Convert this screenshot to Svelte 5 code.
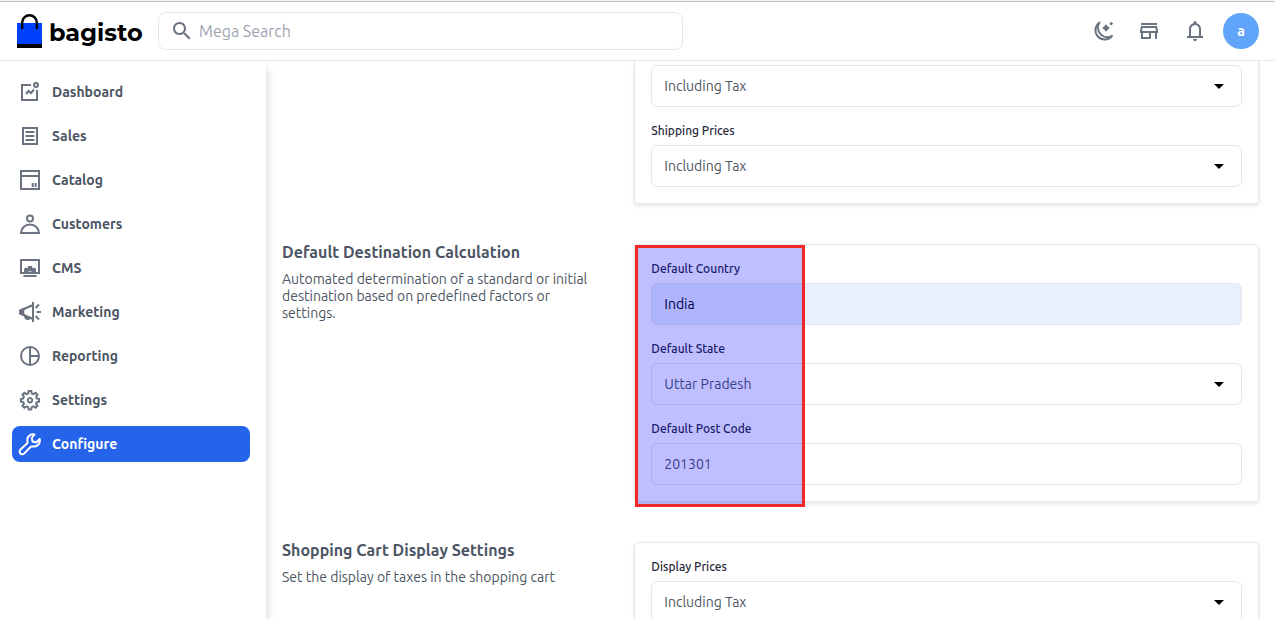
<script>
    let search = "";
    let displayPrices = "Including Tax";
    let shippingPrices = "Including Tax";
    let cartPrices = "Including Tax";
    let country = "India";
    let region = "Uttar Pradesh";
    let postCode = "201301";

    const taxOptions = ["Including Tax", "Excluding Tax", "Both"];
    const active = "Configure";

    const menu = [
        { name: "Dashboard", icon: "M13 5H4v15h15V10M8 14l2.500-3 2.500 2L16 9.500M18 3a2 2 0 1 0 0 4a2 2 0 1 0 0-4z" },
        { name: "Sales", icon: "M5 4h14v16H5zM7.500 8h9M7.500 12h9M7.500 16h9" },
        { name: "Catalog", icon: "M3 3h18v18H3zM3 8h18M14.700 15v4M17.700 15v4" },
        { name: "Customers", icon: "M12 3.500a3 3 0 1 0 0 6a3 3 0 1 0 0-6zM3 21h18a9 8.500 0 0 0-18 0z" },
        { name: "CMS", icon: "M3 4h18v13H3zM5.500 20h13", fill: "M6 17v-4l1.500-1.500 2 .7.5-2.200h4l.5 2.200 2-.7L18 13v4h-3.500a2.500 1.800 0 0 0-5 0z" },
        { name: "Marketing", icon: "M15 2v20M15 5L7 8.500 3 10v4l4 1.500L15 19M7 15.500c0 4 4 4.500 5 2M17.500 8L21 4.500M18.500 12h4.500M17.500 16l3.500 3.500", fill: "M7 7.800L3 9 1 10v4l2 1 4 1.200c-1-2.700-1-5.700 0-8.400z" },
        { name: "Reporting", icon: "M12 3a9 9 0 1 0 0 18a9 9 0 1 0 0-18zM12 3v18M12 12h9" },
        { name: "Settings", icon: "M10.700 3h2.600l.5 2.500 1.700.7 2.100-1.400 1.900 1.900-1.400 2.100.7 1.700 2.300.5v2.600l-2.300.5-.7 1.700 1.400 2.100-1.900 1.900-2.100-1.400-1.700.7-.5 2.300h-2.600l-.5-2.300-1.700-.7-2.100 1.400-1.900-1.900 1.400-2.100-.7-1.700-2.300-.5v-2.600l2.300-.5.7-1.700-1.400-2.100 1.900-1.900 2.100 1.400 1.700-.7zM12 10a2.200 2.200 0 1 0 0 4.400a2.200 2.200 0 1 0 0-4.400z" },
        { name: "Configure", icon: "M16.500 2.500C12 1.500 8.500 5 9.500 9.500C9.700 10.500 9.500 11 9 11.500L2.500 17.500C.8 19.200 1.500 21.500 3.500 22.200C4.500 22.500 5.500 22.200 6.300 21.400L12.500 15C13 14.500 13.500 14.300 14.500 14.500C19 15.300 22.700 11.500 21.700 7L18 10.500L14.500 9.500L13.700 6z" },
    ];
</script>

<div class="page">
    <header>
        <a class="logo" href="#home">
            <svg width="26" height="36" viewBox="0 0 26 36" aria-hidden="true">
                <path fill="#0041ff" d="M0 10h25v21H0z" />
                <path d="M0 31h25v4H0z" />
                <path fill="none" stroke="#000" stroke-width="2.400" d="M5.200 16V9.500a7.300 7.300 0 0 1 14.600 0V16" />
            </svg>
            <span>bagisto</span>
        </a>
        <label class="search">
            <svg width="24" height="24" viewBox="0 0 24 24" aria-hidden="true">
                <path d="M15.500 14h-.79l-.28-.27C15.410 12.590 16 11.110 16 9.500 16 5.910 13.090 3 9.500 3S3 5.910 3 9.500 5.910 16 9.500 16c1.610 0 3.090-.59 4.230-1.570l.27.28v.79l5 4.990L20.490 19l-4.990-5zm-6 0C7.010 14 5 11.990 5 9.500S7.010 5 9.500 5 14 7.010 14 9.500 11.990 14 9.500 14z" />
            </svg>
            <input type="text" placeholder="Mega Search" aria-label="Mega Search" bind:value={search} />
        </label>
        <div class="tools">
            <button aria-label="Dark mode">
                <svg width="24" height="24" viewBox="0 0 24 24">
                    <path fill="none" stroke="currentColor" stroke-width="2" stroke-linejoin="round" d="M8.500 3.500A9.300 9.300 0 1 0 21 17A9.500 9.500 0 0 1 8.500 3.500z" />
                    <path d="M15 5.200l1.700 2.100 2.100 1.700-2.100 1.700-1.700 2.100-1.700-2.100-2.100-1.700 2.100-1.700zM20.300 2.800l.9 1 1 .9-1 .9-.9 1-.9-1-1-.9 1-.9z" />
                </svg>
            </button>
            <button aria-label="Visit shop">
                <svg width="24" height="24" viewBox="0 0 24 24">
                    <path d="M18.360 9l.6 3H5.040l.6-3h12.720M20 4H4v2h16V4zm0 3H4l-1 5v2h1v6h10v-6h4v6h2v-6h1v-2l-1-5zM6 18v-4h6v4H6z" />
                </svg>
            </button>
            <button aria-label="Notifications">
                <svg width="24" height="24" viewBox="0 0 24 24">
                    <path d="M4 19v-2h2v-7q0-2.075 1.250-3.688T10.500 4.200v-.7q0-.625.438-1.062T12 2t1.063.438T13.500 3.500v.7q2 .5 3.250 2.113T18 10v7h2v2zm8 3q-.825 0-1.412-.587T10 20h4q0 .825-.587 1.413T12 22m-4-5h8v-7q0-1.650-1.175-2.825T12 6T9.175 7.175T8 10z" />
                </svg>
            </button>
            <button class="avatar">a</button>
        </div>
    </header>

    <div class="body">
        <nav>
            {#each menu as item}
                <a href="#{item.name.toLowerCase()}" class:active={item.name === active}>
                    <svg width="24" height="24" viewBox="0 0 24 24" aria-hidden="true">
                        <path d={item.icon} />
                        {#if item.fill}
                            <path class="solid" d={item.fill} />
                        {/if}
                    </svg>
                    {item.name}
                </a>
            {/each}
        </nav>

        <main>
            <section>
                <div class="info"></div>
                <div class="card continued">
                    <div class="select">
                        <select aria-label="Display Prices" bind:value={displayPrices}>
                            {#each taxOptions as option}<option>{option}</option>{/each}
                        </select>
                    </div>
                    <label for="shipping">Shipping Prices</label>
                    <div class="select">
                        <select id="shipping" bind:value={shippingPrices}>
                            {#each taxOptions as option}<option>{option}</option>{/each}
                        </select>
                    </div>
                </div>
            </section>

            <section>
                <div class="info">
                    <h2>Default Destination Calculation</h2>
                    <p>Automated determination of a standard or initial destination based on predefined factors or settings.</p>
                </div>
                <div class="card">
                    <label for="country">Default Country</label>
                    <select id="country" class="filled" bind:value={country}>
                        <option>India</option>
                    </select>
                    <label for="state">Default State</label>
                    <div class="select">
                        <select id="state" bind:value={region}>
                            <option>Uttar Pradesh</option>
                        </select>
                    </div>
                    <label for="postcode">Default Post Code</label>
                    <input id="postcode" type="text" bind:value={postCode} />
                    <div class="highlight"></div>
                </div>
            </section>

            <section>
                <div class="info">
                    <h2>Shopping Cart Display Settings</h2>
                    <p>Set the display of taxes in the shopping cart</p>
                </div>
                <div class="card">
                    <label for="cart">Display Prices</label>
                    <div class="select">
                        <select id="cart" bind:value={cartPrices}>
                            {#each taxOptions as option}<option>{option}</option>{/each}
                        </select>
                    </div>
                </div>
            </section>
        </main>
    </div>
</div>

<style>
    :global(body) {
        background: #fff;
    }
    .page {
        display: flex;
        flex-direction: column;
        height: 100vh;
        overflow: hidden;
        color: #4b5563;
        font-family: Ubuntu, "Noto Sans", sans-serif;
        font-size: 14px;
    }
    .page * {
        box-sizing: border-box;
    }
    input,
    select,
    button {
        font: inherit;
        color: inherit;
    }
    svg {
        flex: none;
        display: block;
        fill: currentColor;
    }

    header {
        display: flex;
        align-items: center;
        flex: none;
        height: 61px;
        padding: 2px 16px 0;
        border-bottom: 1px solid #e5e7eb;
        box-shadow: inset 0 1px #f5f5f5, inset 0 2px #bfbfbf;
    }
    .logo {
        display: flex;
        align-items: center;
        gap: 6px;
        width: 142px;
        padding-left: 1px;
        color: #000;
        font-family: Montserrat, Inter, sans-serif;
        font-size: 24px;
        font-weight: 700;
        text-decoration: none;
    }
    .logo svg {
        fill: #000;
    }
    .logo span {
        padding-top: 3px;
    }
    .search {
        display: flex;
        align-items: center;
        gap: 5px;
        width: 525px;
        height: 38px;
        padding: 0 11px;
        border: 1px solid #e5e7eb;
        border-radius: 8px;
        color: #6b7280;
    }
    .search input {
        flex: 1;
        border: 0;
        padding: 0;
        outline: 0;
        font-size: 16px;
    }
    .search input::placeholder {
        color: #9ca3af;
    }
    .tools {
        display: flex;
        gap: 10px;
        margin-left: auto;
    }
    .tools button {
        width: 36px;
        height: 36px;
        padding: 6px;
        border: 0;
        background: none;
        color: #6b7280;
    }
    .tools .avatar {
        border-radius: 50%;
        background: #60a5fa;
        color: #fff;
        font-weight: 700;
    }

    .body {
        display: flex;
        flex: 1;
        min-height: 0;
    }
    nav {
        display: flex;
        flex-direction: column;
        gap: 8px;
        flex: none;
        width: 266px;
        padding: 13px 16px 0 12px;
        box-shadow: 0 8px 10px 0 rgba(0, 0, 0, 0.2);
        clip-path: inset(0 -20px 0 0);
    }
    nav a {
        display: flex;
        align-items: center;
        gap: 10px;
        height: 36px;
        padding: 0 6px;
        border-radius: 8px;
        color: #4b5563;
        font-weight: 700;
        text-decoration: none;
    }
    nav svg {
        fill: none;
        stroke: #6b7280;
        stroke-width: 2;
    }
    nav .solid {
        fill: #6b7280;
        stroke: none;
    }
    nav .active {
        background: #2563eb;
        color: #fff;
    }
    nav .active svg {
        stroke: #fff;
        stroke-linejoin: round;
    }

    main {
        display: flex;
        flex-direction: column;
        gap: 40px;
        flex: 1;
        min-width: 0;
        padding: 0 16px;
        overflow: hidden;
    }
    section {
        display: grid;
        grid-template-columns: 1fr 2fr;
        gap: 40px;
        flex: none;
    }
    h2 {
        margin: 0;
        font-size: 16px;
        font-weight: 700;
        line-height: 16px;
    }
    p {
        margin: 11px 0 0;
        line-height: 17px;
    }
    .card {
        position: relative;
        display: flex;
        flex-direction: column;
        padding: 16px;
        border: 1px solid #e5e7eb;
        border-radius: 4px;
        box-shadow: 0 2px 4px rgba(0, 0, 0, 0.1);
    }
    .continued {
        padding-top: 4px;
        border-top: 0;
        border-radius: 0 0 4px 4px;
    }
    label {
        color: #1f2937;
    }
    .card label {
        margin-bottom: 6px;
        font-size: 12px;
        font-weight: 500;
        line-height: 16px;
    }
    .card label:not(:first-child) {
        margin-top: 16px;
    }
    .card select,
    .card input {
        width: 100%;
        height: 42px;
        padding: 0 12px;
        border: 1px solid #e5e7eb;
        border-radius: 6px;
        background: #fff;
        appearance: none;
    }
    .card .filled {
        background: #e8f0fe;
        color: #000;
    }
    .select {
        position: relative;
    }
    .select::after {
        content: "";
        position: absolute;
        top: 19px;
        right: 18px;
        border: 5px solid transparent;
        border-top-color: #000;
        border-bottom: 0;
        pointer-events: none;
    }
    .highlight {
        position: absolute;
        top: 0;
        left: 0;
        width: 170px;
        height: 262px;
        border: 3px solid #ef2929;
        background: rgba(0, 0, 255, 0.25);
        pointer-events: none;
    }
</style>
